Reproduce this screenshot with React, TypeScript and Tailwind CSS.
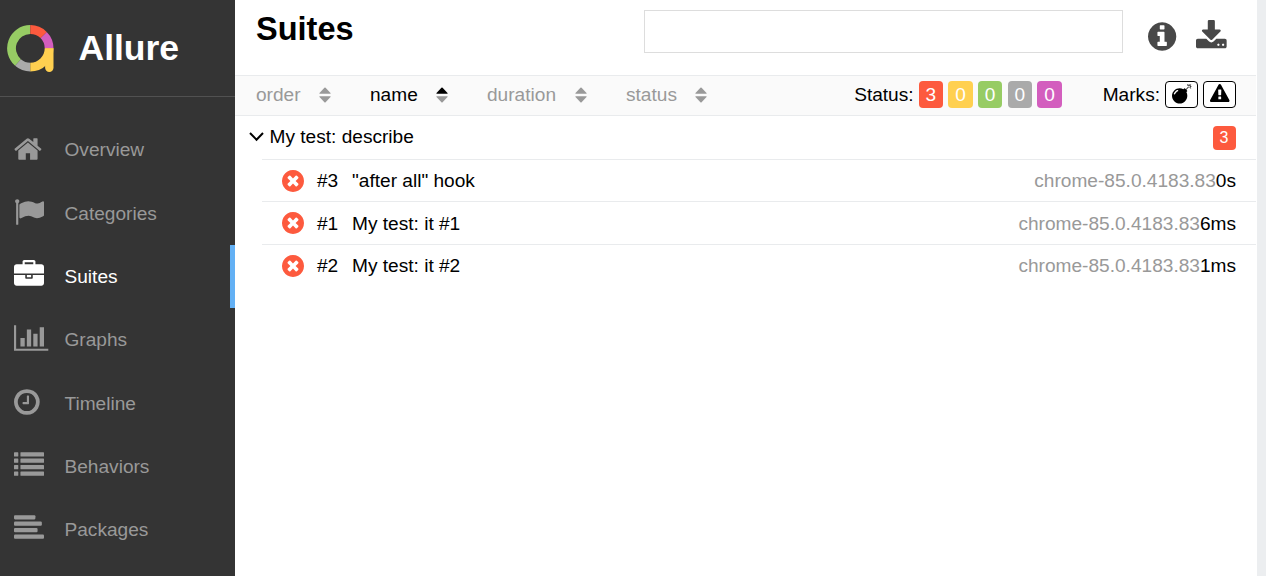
import type { ReactNode } from "react";

const CIRCLE =
  "M1664 896q0 209-103 385.5t-279.5 279.5-385.5 103-385.5-103-279.5-279.5-103-385.5 103-385.5 279.5-279.5 385.5-103 385.5 103 279.5 279.5 103 385.5z";

type IconProps = {
  className?: string;
  viewBox?: string;
  children: ReactNode;
};

function Icon({ className, viewBox = "0 0 1792 1792", children }: IconProps) {
  return (
    <svg
      aria-hidden="true"
      className={`shrink-0 overflow-visible fill-current ${className ?? ""}`}
      viewBox={viewBox}
    >
      {children}
    </svg>
  );
}

const navItems = [
  {
    label: "Overview",
    viewBox: "64 0 1792 1792",
    icon: (
      <path d="M1472 992v480q0 26-19 45t-45 19h-384v-384h-256v384h-384q-26 0-45-19t-19-45v-480q0-1 .5-3t.5-3l575-474 575 474q1 2 1 6zm223-69l-62 74q-8 9-21 11h-3q-13 0-21-7l-692-577-692 577q-12 8-24 7-13-2-21-11l-62-74q-8-10-7-23.5t11-21.5l719-599q32-26 76-26t76 26l244 204v-195q0-14 9-23t23-9h192q14 0 23 9t9 23v408l219 182q10 8 11 21.5t-7 23.5z" />
    ),
  },
  {
    label: "Categories",
    icon: (
      <path d="M320 256q0 72-64 110v1266q0 13-9.5 22.5t-22.5 9.5h-64q-13 0-22.5-9.5t-9.5-22.5v-1266q-64-38-64-110 0-53 37.5-90.5t90.5-37.5 90.5 37.5 37.5 90.5zm1472 64v763q0 25-12.5 38.5t-39.5 27.5q-215 116-369 116-61 0-123.5-22t-108.5-48-115.5-48-142.5-22q-192 0-464 146-17 9-33 9-26 0-45-19t-19-45v-742q0-32 31-55 21-14 79-43 236-120 421-120 107 0 200 29t219 88q38 19 88 19 54 0 117.5-21t110-47 88-47 54.5-21q26 0 45 19t19 45z" />
    ),
  },
  {
    label: "Suites",
    active: true,
    icon: (
      <path d="M640 256h512v-128h-512v128zm1152 640v480q0 66-47 113t-113 47h-1472q-66 0-113-47t-47-113v-480h672v160q0 26 19 45t45 19h320q26 0 45-19t19-45v-160h672zm-768 0v128h-256v-128h256zm768-480v384h-1792v-384q0-66 47-113t113-47h352v-160q0-40 28-68t68-28h576q40 0 68 28t28 68v160h352q66 0 113 47t47 113z" />
    ),
  },
  {
    label: "Graphs",
    icon: (
      <path d="M640 896v512h-256v-512h256zm384-512v1024h-256v-1024h256zm1024 1152v128h-2048v-1536h128v1408h1920zm-640-896v768h-256v-768h256zm384-384v1152h-256v-1152h256z" />
    ),
  },
  {
    label: "Timeline",
    viewBox: "128 0 1792 1792",
    icon: (
      <path d="M1024 544v448q0 14-9 23t-23 9h-320q-14 0-23-9t-9-23v-64q0-14 9-23t23-9h224v-352q0-14 9-23t23-9h64q14 0 23 9t9 23zm416 352q0-148-73-273t-198-198-273-73-273 73-198 198-73 273 73 273 198 198 273 73 273-73 198-198 73-273zm224 0q0 209-103 385.5t-279.5 279.5-385.5 103-385.5-103-279.5-279.5-103-385.5 103-385.5 279.5-279.5 385.5-103 385.5 103 279.5 279.5 103 385.5z" />
    ),
  },
  {
    label: "Behaviors",
    icon: [128, 512, 896, 1280].map((y) => (
      <g key={y}>
        <rect x="0" y={y} width="256" height="256" rx="32" />
        <rect x="384" y={y} width="1408" height="256" rx="32" />
      </g>
    )),
  },
  {
    label: "Packages",
    icon: [1280, 1664, 1408, 1792].map((width, i) => (
      <rect key={width} x="0" y={128 + i * 384} width={width} height="256" rx="64" />
    )),
  },
];

const sorters = [
  { label: "order", className: "w-[114px]" },
  { label: "name", className: "w-[117px]", active: true },
  { label: "duration", className: "w-[139px]" },
  { label: "status", className: "w-[120px]" },
];

const statuses = [
  { name: "failed", count: 3, className: "bg-[#fd5a3e]" },
  { name: "broken", count: 0, className: "bg-[#ffd050]" },
  { name: "passed", count: 0, className: "bg-[#97cc64]" },
  { name: "skipped", count: 0, className: "bg-[#aaaaaa]" },
  { name: "unknown", count: 0, className: "bg-[#d35ebe]" },
];

const tests = [
  { order: "#3", name: '"after all" hook', duration: "0s" },
  { order: "#1", name: "My test: it #1", duration: "6ms" },
  { order: "#2", name: "My test: it #2", duration: "1ms" },
];

function Logo() {
  return (
    <svg aria-hidden="true" className="h-[47px] w-[47px] shrink-0" viewBox="0 0 47 47" fill="none" strokeWidth="8.8">
      <path stroke="#97cc64" d="M23.3 4.5A18.8 18.8 0 0 0 11 37.5" />
      <path stroke="#aaaaaa" d="M11 37.5A18.8 18.8 0 0 0 23.3 42.1" />
      <path stroke="#ffd050" d="M23.3 42.1A18.8 18.8 0 0 0 42.1 23.3" />
      <path stroke="#d35ebe" d="M42.1 23.3A18.8 18.8 0 0 0 36.6 10" />
      <path stroke="#fd5a3e" d="M36.6 10A18.8 18.8 0 0 0 23.3 4.5" />
      <path fill="#ffd050" d="M38.1 23.3h8.4v19.4a4.2 4.2 0 0 1-8.4 0z" />
    </svg>
  );
}

function Sidebar() {
  return (
    <aside className="w-[235px] shrink-0 bg-[#343434] text-[#999]">
      <div className="flex h-[97px] items-center border-b border-[#515151] pl-[7px]">
        <Logo />
        <span className="pt-[2px] pl-[24.5px] text-[35.5px] font-bold text-white">Allure</span>
      </div>
      <nav className="pt-[21.4px]">
        {navItems.map((item) => (
          <a
            key={item.label}
            className={`flex h-[63.3px] items-center border-r-[5px] pl-3.5 ${
              item.active ? "border-[#63b0f4] text-white" : "border-transparent"
            }`}
          >
            <Icon className="mr-[20.5px] mb-[3px] h-[30px] w-[30px]" viewBox={item.viewBox}>
              {item.icon}
            </Icon>
            {item.label}
          </a>
        ))}
      </nav>
    </aside>
  );
}

function SortIcon({ active }: { active?: boolean }) {
  return (
    <svg aria-hidden="true" className="h-[16px] w-[12px]" viewBox="0 0 12 16">
      <path className={active ? "fill-black" : "fill-[#999]"} d="M.8 6.8Q0 6.8.5 6L5.4.8Q6 .2 6.6.8L11.5 6Q12 6.8 11.2 6.8z" />
      <path className="fill-[#999]" d="M.8 9.2Q0 9.2.5 10L5.4 15.2Q6 15.8 6.6 15.2L11.5 10Q12 9.2 11.2 9.2z" />
    </svg>
  );
}

function Toolbar() {
  return (
    <div className="flex h-[41px] items-center border-y border-[#e9ebed] bg-[#fafafa] pr-5 pb-[2px] pl-[21px]">
      {sorters.map((s) => (
        <div key={s.label} className={`flex items-center pt-px ${s.className} ${s.active ? "" : "text-[#999]"}`}>
          <span className="mr-[18.5px]">{s.label}</span>
          <SortIcon active={s.active} />
        </div>
      ))}
      <div className="ml-auto flex items-center">
        <span className="mr-[5px]">Status:</span>
        <div className="flex gap-[5.3px] text-white">
          {statuses.map((s) => (
            <span
              key={s.name}
              className={`flex h-[27px] w-[24.4px] items-center justify-center rounded-[4px] ${s.className}`}
            >
              {s.count}
            </span>
          ))}
        </div>
      </div>
      <div className="ml-[41px] flex items-center">
        <span className="mr-[5px]">Marks:</span>
        <div className="flex gap-[5px]">
          <span className="flex h-[27px] w-[33px] items-center justify-center rounded-[4px] border-[1.5px] border-black bg-white">
            <Icon className="mb-px h-[19.5px] w-[19.5px]">
              <path d="M571 589q-10-25-34-35t-49 0q-108 44-191 127t-127 191q-10 25 0 49t35 34q13 5 24 5 42 0 60-40 34-84 98.5-148.5t148.5-98.5q25-11 35-35t0-49zm942-356l46 46-244 243 68 68q19 19 19 45.5t-19 45.5l-64 64q89 161 89 343 0 143-55.5 273.5t-150 225-225 150-273.5 55.5-273.5-55.5-225-150-150-225-55.5-273.5 55.5-273.5 150-225 225-150 273.5-55.5q182 0 343 89l64-64q19-19 45.5-19t45.5 19l68 68zm8-56q-10 10-22 10-13 0-23-10l-91-90q-9-10-9-23t9-23q10-9 23-9t23 9l90 91q10 9 10 22.5t-10 22.5zm230 230q-11 9-23 9t-23-9l-90-91q-10-9-10-22.5t10-22.5q9-10 22.5-10t22.5 10l91 90q9 10 9 23t-9 23zm41-183q0 14-9 23t-23 9h-96q-14 0-23-9t-9-23 9-23 23-9h96q14 0 23 9t9 23zm-192-192v96q0 14-9 23t-23 9-23-9-9-23v-96q0-14 9-23t23-9 23 9 9 23zm151 55l-91 90q-10 10-22 10-13 0-23-10-10-9-10-22.5t10-22.5l90-91q10-9 23-9t23 9q9 10 9 23t-9 23z" />
            </Icon>
          </span>
          <span className="flex h-[27px] w-[33px] items-center justify-center rounded-[4px] border-[1.5px] border-black bg-white">
            <Icon className="mb-px h-[19.5px] w-[19.5px]">
              <path d="M1024 1375v-190q0-14-9.5-23.5t-22.5-9.5h-192q-13 0-22.5 9.5t-9.5 23.5v190q0 14 9.5 23.5t22.5 9.5h192q13 0 22.5-9.5t9.5-23.5zm-2-374l18-459q0-12-10-19-13-11-24-11h-220q-11 0-24 11-10 7-10 21l17 457q0 10 10 16.5t24 6.5h185q14 0 23.5-6.5t10.5-16.5zm-14-934l768 1408q35 63-2 126-17 29-46.5 46t-63.5 17h-1536q-34 0-63.5-17t-46.5-46q-37-63-2-126l768-1408q17-31 47-49t65-18 65 18 47 49z" />
            </Icon>
          </span>
        </div>
      </div>
    </div>
  );
}

function Tree() {
  return (
    <div>
      <div className="flex h-[43px] items-center pr-[20.5px] pl-[13.5px]">
        <svg
          aria-hidden="true"
          className="mr-[6px] mb-px h-[10px] w-[15px]"
          viewBox="0 0 15 10"
          fill="none"
          stroke="currentColor"
          strokeWidth="2"
        >
          <path d="M1 1l6.5 6.7L14 1" />
        </svg>
        <span className="-mt-px">My test: describe</span>
        <span className="mt-px ml-auto flex h-[24.5px] w-[23px] items-center justify-center rounded-[4px] bg-[#fd5a3e] text-[16px] text-white">
          3
        </span>
      </div>
      <div className="pl-[27px]">
        {tests.map((t) => (
          <div
            key={t.order}
            className="flex h-[42.4px] items-center border-t border-[#e9ebed] pt-[0.6px] pr-5 pl-[19.5px]"
          >
            <Icon className="h-[22px] w-[22px] text-[#fd5a3e]" viewBox="128 128 1536 1536">
              <path d="M1277 1122q0-26-19-45l-181-181 181-181q19-19 19-45 0-27-19-46l-90-90q-19-19-46-19-26 0-45 19l-181 181-181-181q-19-19-45-19-27 0-46 19l-90 90q-19 19-19 46 0 26 19 45l181 181-181 181q-19 19-19 45 0 27 19 46l90 90q19 19 46 19 26 0 45-19l181-181 181 181q19 19 45 19 27 0 46-19l90-90q19-19 19-46zm387-226q0 209-103 385.5t-279.5 279.5-385.5 103-385.5-103-279.5-279.5-103-385.5 103-385.5 279.5-279.5 385.5-103 385.5 103 279.5 279.5 103 385.5z" />
            </Icon>
            <span className="ml-[13.5px] w-[35px]">{t.order}</span>
            <span>{t.name}</span>
            <span className="ml-auto text-[#999]">chrome-85.0.4183.83</span>
            <span>{t.duration}</span>
          </div>
        ))}
      </div>
    </div>
  );
}

export default function App() {
  return (
    <div className="flex h-[576px] w-[1280px] overflow-hidden bg-white font-['Helvetica_Neue','Liberation_Sans',Arial,sans-serif] text-[19.1px] leading-none text-black">
      <Sidebar />
      <main className="min-w-0 flex-1">
        <header className="flex h-[75px] items-start pl-[21px]">
          <h1 className="mt-[13px] text-[32.5px] font-bold">Suites</h1>
          <input
            aria-label="Search"
            className="mt-[10px] mr-[25px] ml-auto h-[43px] w-[479px] border border-[#dddddd] outline-none"
          />
          <Icon className="mt-[19.5px] h-[33px] w-[33px] text-[#484848]" viewBox="128 0 1792 1792">
            <path
              fillRule="evenodd"
              d={`M1152 1376v-160q0-14-9-23t-23-9h-96v-512q0-14-9-23t-23-9h-320q-14 0-23 9t-9 23v160q0 14 9 23t23 9h96v320h-96q-14 0-23 9t-9 23v160q0 14 9 23t23 9h448q14 0 23-9t9-23zm-128-896v-160q0-14-9-23t-23-9h-192q-14 0-23 9t-9 23v160q0 14 9 23t23 9h192q14 0 23-9t9-23z${CIRCLE}`}
            />
          </Icon>
          <Icon className="mt-[19.7px] mr-[27.5px] ml-[14.5px] h-[33px] w-[33px] text-[#484848]" viewBox="64 0 1792 1792">
            <path d="M1344 1344q0-26-19-45t-45-19-45 19-19 45 19 45 45 19 45-19 19-45zm256 0q0-26-19-45t-45-19-45 19-19 45 19 45 45 19 45-19 19-45zm128-224v320q0 40-28 68t-68 28h-1472q-40 0-68-28t-28-68v-320q0-40 28-68t68-28h465l135 136q58 56 136 56t136-56l136-136h464q40 0 68 28t28 68zm-325-569q17 41-14 70l-448 448q-18 19-45 19t-45-19l-448-448q-31-29-14-70 17-39 59-39h256v-448q0-26 19-45t45-19h256q26 0 45 19t19 45v448h256q42 0 59 39z" />
          </Icon>
        </header>
        <Toolbar />
        <Tree />
      </main>
      <div className="mr-[14px] ml-px w-[9px] shrink-0 bg-[#eceef0]" />
    </div>
  );
}
